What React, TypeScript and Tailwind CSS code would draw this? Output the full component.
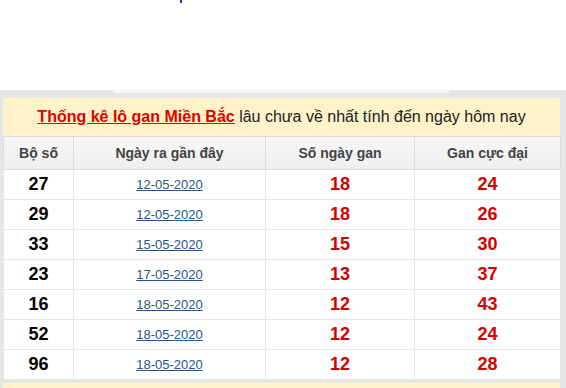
const rows = [
  { so: "27", ngay: "12-05-2020", gan: "18", max: "24" },
  { so: "29", ngay: "12-05-2020", gan: "18", max: "26" },
  { so: "33", ngay: "15-05-2020", gan: "15", max: "30" },
  { so: "23", ngay: "17-05-2020", gan: "13", max: "37" },
  { so: "16", ngay: "18-05-2020", gan: "12", max: "43" },
  { so: "52", ngay: "18-05-2020", gan: "12", max: "24" },
  { so: "96", ngay: "18-05-2020", gan: "12", max: "28" },
];

const App = () => {
  return (
    <div className="w-[566px] h-[388px] overflow-hidden bg-white font-['Liberation_Sans',Arial,sans-serif]">
      <div className="h-[90px] pl-[180px]">
        <div className="w-[2px] h-[3px] bg-[#2b2bd0]" />
      </div>

      <div className="bg-[#e6e6e6] pl-[3px] pr-[6px]">
        <div className="h-[8px]">
          <div className="ml-[110px] w-[336px] h-[3px] bg-[#f6f6f6]" />
        </div>

        <div className="h-[38px] bg-[#fdf2c8] flex items-center justify-center text-[16px] text-[#222]">
          <a href="#" className="font-bold text-[#e00000] underline">
            Thống kê lô gan Miền Bắc
          </a>
          <span>&nbsp;lâu chưa về nhất tính đến ngày hôm nay</span>
        </div>

        <table className="w-[557px] border-collapse bg-white table-fixed">
          <colgroup>
            <col className="w-[70px]" />
            <col className="w-[192px]" />
            <col className="w-[149px]" />
            <col className="w-[146px]" />
          </colgroup>
          <thead>
            <tr className="h-[33px] bg-gradient-to-b from-[#f7f7f7] to-[#eeeeee] text-[14px] font-bold text-[#444]">
              <th className="border border-[#dcdcdc] font-bold">Bộ số</th>
              <th className="border border-[#dcdcdc] font-bold">Ngày ra gần đây</th>
              <th className="border border-[#dcdcdc] font-bold">Số ngày gan</th>
              <th className="border border-[#dcdcdc] font-bold">Gan cực đại</th>
            </tr>
          </thead>
          <tbody>
            {rows.map((r, i) => (
              <tr key={i} className="h-[30px] text-center">
                <td className="border border-[#e8e8e8] text-[18px] font-bold text-black">{r.so}</td>
                <td className="border border-[#e8e8e8] text-[13px]">
                  <a href="#" className="text-[#24568c] underline">{r.ngay}</a>
                </td>
                <td className="border border-[#e8e8e8] text-[18px] font-bold text-[#d40000]">{r.gan}</td>
                <td className="border border-[#e8e8e8] text-[18px] font-bold text-[#d40000]">{r.max}</td>
              </tr>
            ))}
          </tbody>
        </table>

        <div className="h-[3px]" />
        <div className="h-[10px] bg-[#fdf2c8]" />
      </div>
    </div>
  );
};

export default App;
